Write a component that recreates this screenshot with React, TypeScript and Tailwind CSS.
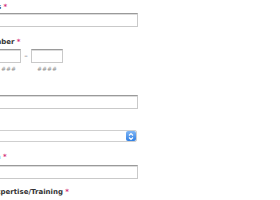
const labelCls = "block text-[7px] leading-[10px] font-bold text-[#333] whitespace-nowrap";
const inputCls =
  "block h-[14px] bg-white border border-[#c9c9c9] border-t-[#9a9a9a] shadow-[inset_0_1px_0_#dcdcdc] outline-none";
const hintCls = "mt-[2px] text-[6px] leading-[8px] italic text-[#8a8a8a]";

function Req() {
  return <span className="text-[#d4317a]"> *</span>;
}

function ChevronButton() {
  return (
    <span className="absolute right-0 top-0 flex h-full w-[10px] items-center justify-center rounded-[2px] bg-gradient-to-b from-[#7fb6f5] to-[#2f7fe3]">
      <svg width="6" height="9" viewBox="0 0 6 9" fill="none" stroke="white" strokeWidth="1.2">
        <path d="M1 3.5 L3 1.5 L5 3.5" />
        <path d="M1 5.5 L3 7.5 L5 5.5" />
      </svg>
    </span>
  );
}

export default function App() {
  return (
    <div
      className="w-[280px] h-[200px] overflow-hidden bg-white"
      style={{ fontFamily: '"DejaVu Sans", sans-serif' }}
    >
      <div className="-ml-[44px] pt-[2px]">
        <label className={labelCls}>
          Credentials
          <Req />
        </label>
        <input className={`${inputCls} mt-[1px] w-[182px]`} />

        <label className={`${labelCls} mt-[10px]`}>
          Phone Number
          <Req />
        </label>
        <div className="mt-[2px] flex items-start">
          <div className="flex flex-col items-center">
            <input className={`${inputCls} w-[25px]`} />
            <span className={hintCls}>###</span>
          </div>
          <div className="ml-[15px] flex flex-col items-center">
            <input className={`${inputCls} w-[25px]`} />
            <span className={hintCls}>###</span>
          </div>
          <span className="flex h-[14px] w-[10px] items-center justify-center text-[7px] text-[#555]">–</span>
          <div className="flex flex-col items-center">
            <input className={`${inputCls} w-[32px]`} />
            <span className={hintCls}>####</span>
          </div>
        </div>

        <label className={`${labelCls} mt-[11px]`}>Fax</label>
        <input className={`${inputCls} mt-[1px] w-[182px]`} />

        <label className={`${labelCls} mt-[10px]`}>Country</label>
        <div className="relative mt-[1px] h-[12px] w-[181px] rounded-[2px] border border-[#cfcfcf] bg-white">
          <ChevronButton />
        </div>

        <label className={`${labelCls} mt-[10px]`}>
          Occupation
          <Req />
        </label>
        <input className={`${inputCls} mt-[3px] w-[182px]`} />

        <label className={`${labelCls} mt-[8px]`}>
          Areas of Expertise/Training
          <Req />
        </label>
      </div>
    </div>
  );
}
